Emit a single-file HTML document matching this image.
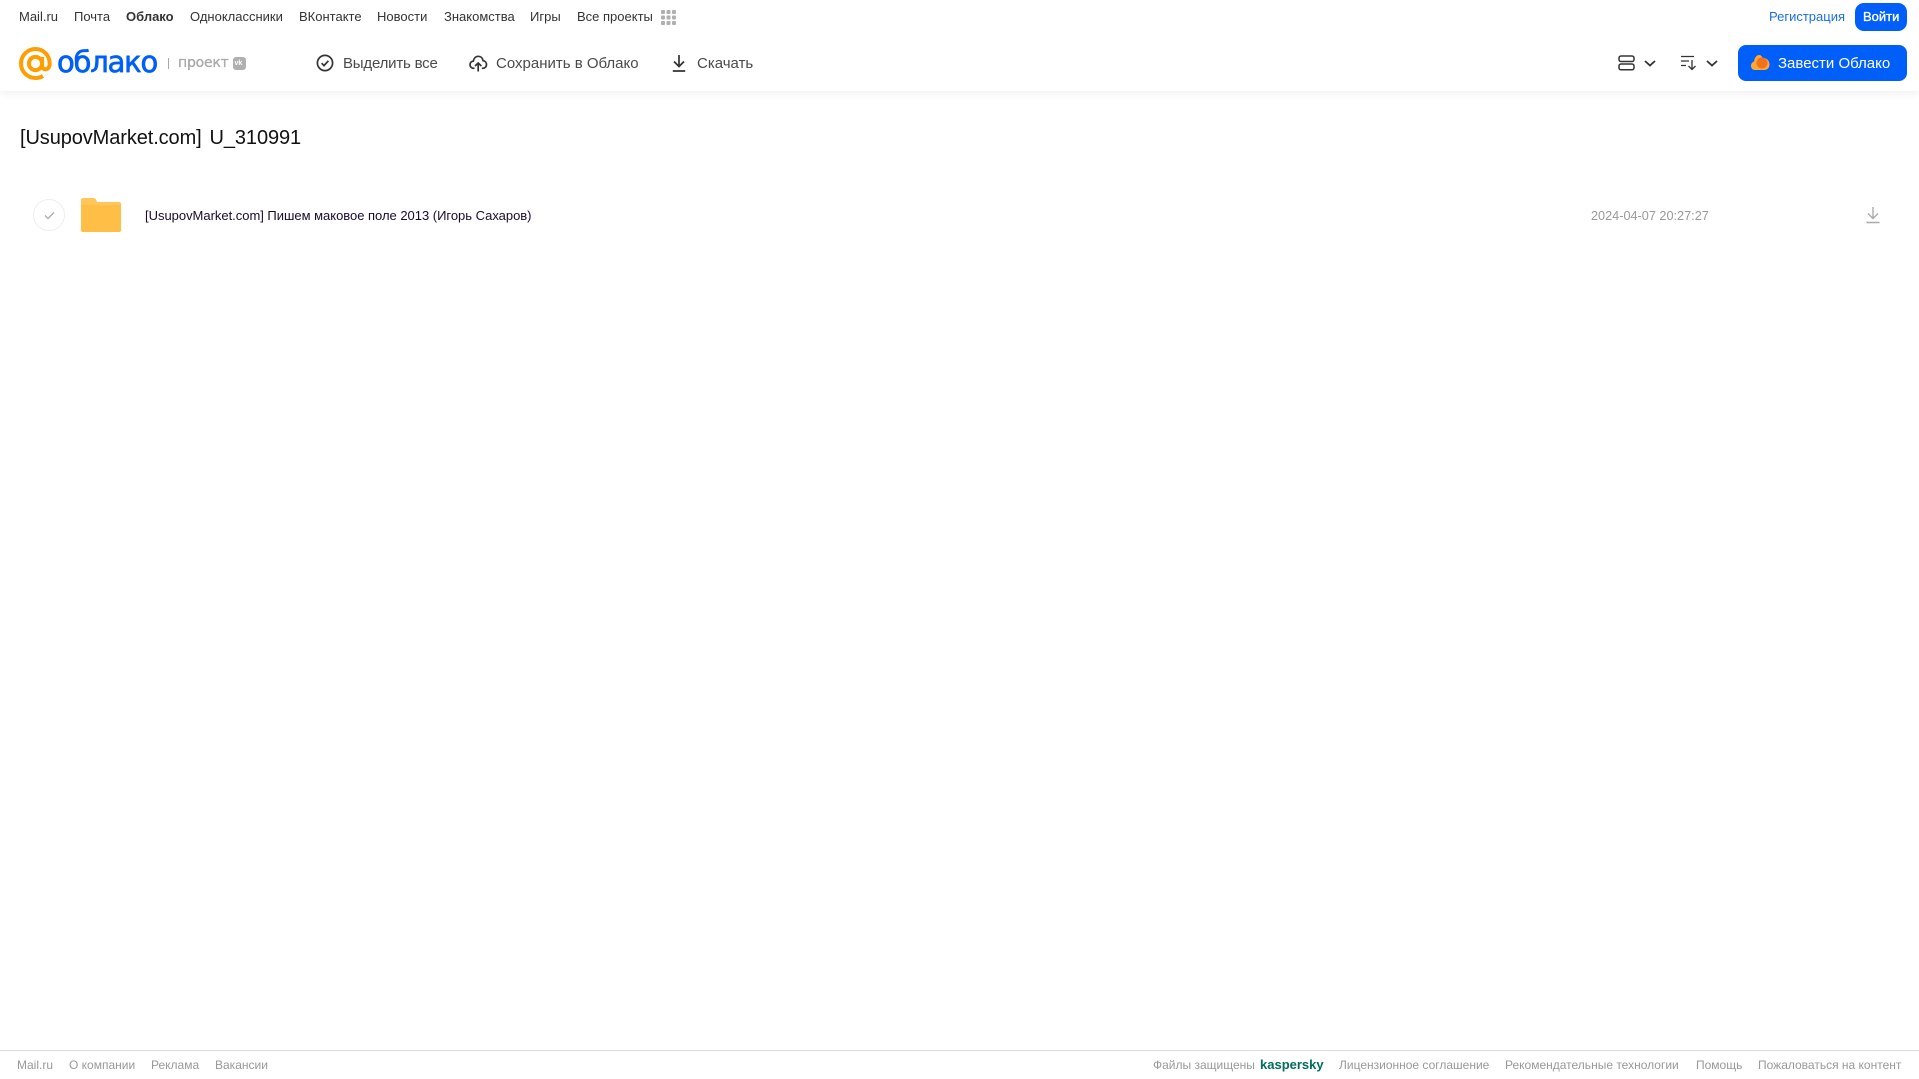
<!DOCTYPE html>
<html lang="ru">
<head>
<meta charset="utf-8">
<title>Облако</title>
<style>
html,body{margin:0;padding:0;background:#fff}
body{width:1919px;height:1079px;position:relative;overflow:hidden;font-family:"Liberation Sans","Noto Sans CJK SC",sans-serif}
.t{position:absolute;white-space:nowrap;line-height:20px}
.n{font-size:13px;color:#333;top:7px}
.a{color:#4a4a4a;top:53.5px;font-family:"Liberation Sans",sans-serif;font-size:15px}
.f{font-size:12px;color:#999;top:1055px}
svg{position:absolute;overflow:visible}
</style>
</head>
<body>
<div style="position:absolute;left:0;top:0;width:1919px;height:91px;background:#fff;box-shadow:0 2px 8px rgba(0,0,0,.07)"></div>

<span class="t n" style="left:19px">Mail.ru</span>
<span class="t n" style="left:74px">Почта</span>
<span class="t n" style="left:126px;font-weight:bold">Облако</span>
<span class="t n" style="left:190px">Одноклассники</span>
<span class="t n" style="left:299px">ВКонтакте</span>
<span class="t n" style="left:377px">Новости</span>
<span class="t n" style="left:444px">Знакомства</span>
<span class="t n" style="left:530px">Игры</span>
<span class="t n" style="left:577px">Все проекты</span>
<svg style="left:661px;top:10px" width="15" height="15" fill="#b0b0b0"><rect x="0" y="0" width="4" height="4" rx="1"/><rect x="5.5" y="0" width="4" height="4" rx="1"/><rect x="11" y="0" width="4" height="4" rx="1"/><rect x="0" y="5.5" width="4" height="4" rx="1"/><rect x="5.5" y="5.5" width="4" height="4" rx="1"/><rect x="11" y="5.5" width="4" height="4" rx="1"/><rect x="0" y="11" width="4" height="4" rx="1"/><rect x="5.5" y="11" width="4" height="4" rx="1"/><rect x="11" y="11" width="4" height="4" rx="1"/></svg>

<span class="t n" style="left:1769px;color:#1a6fe8">Регистрация</span>
<div style="position:absolute;left:1855px;top:3px;width:52px;height:28px;background:#005ff9;border-radius:9px"></div>
<span class="t n" style="left:1863px;color:#fff;-webkit-text-stroke:.35px #fff">Войти</span>

<!-- logo -->
<svg style="left:19px;top:47px" width="33" height="33" viewBox="0 0 33 33" fill="none" stroke="#ff9e00" stroke-width="4"><circle cx="16.5" cy="16.5" r="6.6"/><path d="M23.1 10v8.500c0 5.500 7.600 5.200 7.600-2C30.700 8.500 24.500 2 16.500 2 8.500 2 2 8.500 2 16.500S8.500 31 16.500 31c3 0 5.500-.8 7.500-2"/></svg>
<span class="t" style="left:57px;top:46px;line-height:32px;font-size:29px;color:#005ff9;font-family:'DejaVu Sans',sans-serif;letter-spacing:-1.2px;-webkit-text-stroke:.7px #005ff9">облако</span>
<div style="position:absolute;left:168px;top:58px;width:1px;height:11px;background:#aaa"></div>
<span class="t" style="left:178px;top:53px;font-size:14px;color:#a8a8a8;font-family:'DejaVu Sans',sans-serif;letter-spacing:-.2px;-webkit-text-stroke:.3px #a8a8a8">проект</span>
<div style="position:absolute;left:233px;top:57px;width:13px;height:13px;background:#b0b0b0;border-radius:3px"></div>
<span class="t" style="left:234.5px;top:58px;line-height:11px;font-size:7px;color:#fff;font-weight:bold">vk</span>

<!-- actions -->
<svg style="left:316px;top:54px" width="18" height="18" viewBox="0 0 18 18" fill="none" stroke="#333" stroke-width="1.700"><circle cx="9" cy="9" r="7.600"/><path d="M5.600 9.200l2.400 2.400 4.400-4.800"/></svg>
<span class="t a" style="left:343px;letter-spacing:-.2px">Выделить все</span>
<svg style="left:469px;top:54px" width="18" height="18" viewBox="0 0 18 18" fill="none" stroke="#333" stroke-width="1.700"><path d="M5.500 14.300H4.800C2.600 14.300 1 12.700 1 10.700c0-1.900 1.400-3.400 3.300-3.600C4.900 4.300 6.800 2.300 9.300 2.300c2.400 0 4.300 1.800 4.800 4.400 2 .3 3.400 1.900 3.400 3.900 0 2-1.500 3.700-3.700 3.700h-1"/><path d="M9.200 17.500V9.500M6 12l3.200-3 3.200 3"/></svg>
<span class="t a" style="left:496px">Сохранить в Облако</span>
<svg style="left:672px;top:54px" width="14" height="18" viewBox="0 0 14 18" fill="none" stroke="#333" stroke-width="1.700"><path d="M7 1v11M2 7.500l5 5 5-5M.8 17h12.400"/></svg>
<span class="t a" style="left:697px">Скачать</span>

<!-- right controls -->
<svg style="left:1618px;top:55px" width="17" height="16" viewBox="0 0 17 16" fill="none" stroke="#333" stroke-width="1.500"><rect x="1" y="1" width="15" height="5.500" rx="2"/><rect x="1" y="9" width="15" height="5.800" rx="2"/></svg>
<svg style="left:1644px;top:60px" width="12" height="7" viewBox="0 0 12 7" fill="none" stroke="#333" stroke-width="1.800"><path d="M1 1l5 4.500L11 1"/></svg>
<svg style="left:1681px;top:55px" width="16" height="16" viewBox="0 0 16 16" fill="none" stroke="#333" stroke-width="1.300"><path d="M0 1.500h13M0 6h8M0 10.500h5M11 5v9.500M7.500 11l3.500 3.500 3.500-3.500"/></svg>
<svg style="left:1706px;top:60px" width="12" height="7" viewBox="0 0 12 7" fill="none" stroke="#333" stroke-width="1.800"><path d="M1 1l5 4.500L11 1"/></svg>
<div style="position:absolute;left:1738px;top:45px;width:169px;height:36px;background:#005ff9;border-radius:8px"></div>
<svg style="left:1750px;top:54px" width="20" height="17" viewBox="0 0 20 17"><path d="M1 12c0-2.500 1.500-4 3-4.500C4.500 4 6.500 1 9 1c2 0 3 1.500 3.500 3 3-.5 7 2 7 6.500 0 3.500-2.500 5.500-5 5.500H5c-2.500 0-4-2-4-4z" fill="#ffa930"/><circle cx="12" cy="9" r="5.500" fill="#f2701e"/></svg>
<span class="t a" style="left:1778px;color:#fff">Завести Облако</span>

<!-- title -->
<span class="t" style="left:20px;top:126px;line-height:24px;font-size:20px;color:#111;word-spacing:2.500px;letter-spacing:-.1px">[UsupovMarket.com] U_310991</span>

<!-- row -->
<div style="position:absolute;left:33px;top:199px;width:30px;height:30px;border:1px solid #eee;border-radius:50%"></div>
<svg style="left:44px;top:211px" width="11" height="9" viewBox="0 0 11 9" fill="none" stroke="#aaa" stroke-width="1.300"><path d="M1 4.500l3 3 6-6"/></svg>
<svg style="left:81px;top:198px" width="40" height="34" viewBox="0 0 40 34"><path d="M2 0h10c2 0 3 .8 3.500 2.500L16 4h22c1.200 0 2 .8 2 2v26c0 1.200-.8 2-2 2H2c-1.200 0-2-.8-2-2V2C0 .8.800 0 2 0z" fill="#ffc659"/><path d="M0 7h40v25c0 1.200-.8 2-2 2H2c-1.200 0-2-.8-2-2z" fill="#ffbf47"/></svg>
<span class="t" style="left:145px;top:206px;font-size:13px;color:#1a0a2e;letter-spacing:-.02px">[UsupovMarket.com] Пишем маковое поле 2013 (Игорь Сахаров)</span>
<span class="t" style="left:1591px;top:206px;font-size:12.700px;color:#999">2024-04-07 20:27:27</span>
<svg style="left:1866px;top:206px" width="14" height="18" viewBox="0 0 14 18" fill="none" stroke="#aaa" stroke-width="1.400"><path d="M7 1v11M2 7.500l5 5 5-5M.5 16.500h13"/></svg>

<!-- footer -->
<div style="position:absolute;left:0;top:1050px;width:1919px;height:1px;background:#ddd"></div>
<span class="t f" style="left:17px">Mail.ru</span>
<span class="t f" style="left:69px">О компании</span>
<span class="t f" style="left:151px">Реклама</span>
<span class="t f" style="left:215px">Вакансии</span>
<span class="t f" style="left:1153px">Файлы защищены</span>
<span class="t f" style="left:1260px;color:#006d5c;font-weight:bold;font-size:13px">kaspersky</span>
<span class="t f" style="left:1339px">Лицензионное соглашение</span>
<span class="t f" style="left:1505px">Рекомендательные технологии</span>
<span class="t f" style="left:1696px">Помощь</span>
<span class="t f" style="left:1758px">Пожаловаться на контент</span>
</body>
</html>
